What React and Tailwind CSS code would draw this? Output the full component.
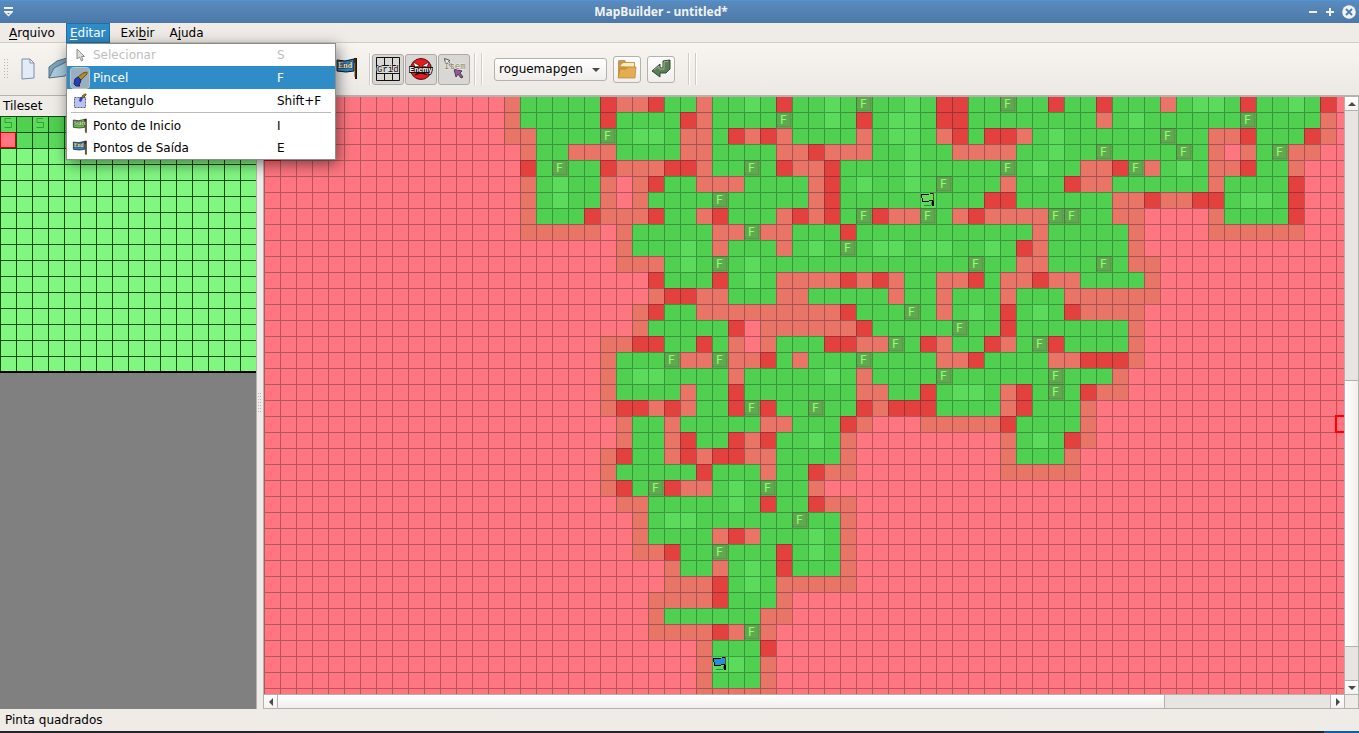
import { useState } from 'react';

const CELL = 16;

const COLORS = {
  '.': '#ff7680',
  o: '#e97568',
  g: '#50d050',
  l: '#5bdb5b',
  r: '#e34040',
  F: '#60a850',
  S: '#5bdb5b',
  E: '#5bdb5b',
};

// One entry per row: first column, then one letter per tile. Tiles that are not listed are walls.
const MAP = [
  [15, 'ogggggroorggogglgr' + 'gglgFgglgrrggFggrg' + 'grgggogllgrgglgr.'],
  [15, 'ogggggrggggroggggF' + 'gglgrgllgrrggggggg' + 'goglggggggFggggo.'],
  [15, 'ooggggFgllgoogroro' + 'ggggogllgorgrroglg' + 'gggggFggoorgggro.'],
  [15, '.oggoooggggooggggo' + 'orooogglggoooogglg' + 'gFggggFgo.ogFoo..'],
  [15, '.rgFggrooorroggFgr' + 'oorgggglgggggFglgg' + 'oorFoglgoorggo...'],
  [15, '.oglggo.orggoooggg' + 'gorglgglgFgggogggr' + 'ooggggggoggggr...'],
  [15, '.oglggo.oggggFgggg' + 'gorgggggSgggrrgggg' + 'ggooroorrgllgr...'],
  [15, '.ogggrooorggorgggo' + 'rorgFrooFgorooooFF' + 'ggoo....oggggr...'],
  [15, '.ooooo.ogggggooFoo' + 'gggrgggggggggggogg' + 'gggo....oooooo...'],
  [15, '.......oggglgogggo' + 'glgFgllgllgglgrogg' + 'gggo'],
  [15, '.......oooglgFglgg' + 'gggggggggggFggoogg' + 'gFgoo'],
  [15, '.........rgggrglgo' + 'ooororoggoorgooroo' + 'ggggo'],
  [15, '.........orroogggo' + 'ogggggoggogggogggo' + 'ooooo'],
  [20, '...orggooooooooor' + 'gggFgoglgrglgroooo.'],
  [20, '...ogggggr.oooooo' + 'rgggggFggrgggggggo.'],
  [20, '.oorrggrgo.ogggrr' + 'ooFgroggrogFrggggo.'],
  [20, '.ogggFooFoorgoggg' + 'Fggggoorggggoorrro.'],
  [20, '.ogllggggogggggl' + 'g' + 'oggggFggggggFgggo..'],
  [20, '.oggggoggrggggggg' + 'ooggrgllgorgFgroo..'],
  [20, '.orroroggrFrggFgg' + 'rorrrggggorgggo....'],
  [20, '..oggogggggoogggr' + 'o...ooooorggggo....'],
  [20, '..oggorggrorgglgo' + '.........oglgro....'],
  [20, '.orggororrooggggo' + '.........ogggo.....'],
  [20, '.ogggggrgggoggroo' + '.........ooooo.....'],
  [20, '.orgFrooglgFggo..'],
  [20, '..ooggggglgrggroo.'],
  [20, '...ogllggggggFggo.'],
  [20, '...oggggoroggglgo.'],
  [20, '...oorggFgggrglgo.'],
  [20, '.....oggoglgrgggo.'],
  [20, '.....ooorglgooooo.'],
  [20, '....oooorgggo.....'],
  [20, '....oggggggoo.....'],
  [20, '....ooooroFo......'],
  [20, '.......ogggr......'],
  [20, '.......oElgo......'],
  [20, '.......ogggo......'],
  [20, '.......ooooo......'],
];

const TILES = MAP.flatMap(([start, line], row) =>
  [...line].map((kind, i) => ({ kind, x: (start + i) * CELL, y: row * CELL })),
).filter((t) => t.kind !== '.');

function Marker({ x, y, fill }) {
  return (
    <g transform={`translate(${x} ${y})`} shapeRendering="crispEdges">
      <path d="M4 13h7v1H4zM11 10h1v3h-1z" fill="#2f8f2f" />
      <path d="M2 3h7V2h4v6H9v1H3V6H2z" fill={fill} />
      <path d="M1 2h3v1H2v3H1zM2 6h1v4H2zM3 9h6v1H3zM9 8h4v1H9zM10 1h3v1h-3zM4 2h5v1H4zM12 9h2v5h-2z" fill="#000" />
      <path d="M13 1h1v8h-1z" fill="#6b4a12" />
    </g>
  );
}

function MapView() {
  return (
    <svg className="block h-full w-full" role="img" aria-label="Mapa" fontFamily="'DejaVu Sans', sans-serif">
      <defs>
        <pattern id="grid" width={CELL} height={CELL} patternUnits="userSpaceOnUse">
          <path d="M0 0H16V1H1V16H0Z" fill="#141414" fillOpacity="0.32" />
        </pattern>
      </defs>
      <svg y="-1" overflow="visible">
        <rect width="100%" height="110%" fill={COLORS['.']} />
        <g shapeRendering="crispEdges">
          {TILES.map((t) => (
            <rect key={`${t.x}-${t.y}`} x={t.x} y={t.y} width={CELL} height={CELL} fill={COLORS[t.kind]} />
          ))}
        </g>
        {TILES.filter((t) => t.kind === 'F').map((t) => (
          <g key={`f${t.x}-${t.y}`}>
            <path d={`M${t.x + 1} ${t.y + 14.5}h13.5v-13`} fill="none" stroke="#579a48" />
            <text x={t.x + 4} y={t.y + 12} fontSize="12" fill="#8cff66">F</text>
          </g>
        ))}
        <rect width="100%" height="110%" fill="url(#grid)" />
        {TILES.filter((t) => t.kind === 'S').map((t) => <Marker key="start" x={t.x} y={t.y} fill="#62e052" />)}
        {TILES.filter((t) => t.kind === 'E').map((t) => <Marker key="end" x={t.x} y={t.y} fill="#2090e0" />)}
        <rect x="0.5" y="48.5" width="16" height="16" fill="none" stroke="#e00000" />
        <rect x="1072" y="320" width="16" height="16" fill="none" stroke="#ff0000" strokeWidth="2" />
      </svg>
    </svg>
  );
}

function Tileset() {
  return (
    <svg width="257" height="257" className="block" role="img" aria-label="Tileset">
      <rect width="256" height="257" fill="#80f880" />
      <rect width="256" height="32" fill="#5bdb5b" />
      <path d="M16 0h16v16H16zM48 0h208v16H48z" fill="#50d050" />
      {[0, 32].map((x) => (
        <path key={x} d={`M${x + 11} 2.5h-6v4h6.500v5h-7`} fill="none" stroke="#2fa42f" />
      ))}
      {Array.from({ length: 16 }, (_, i) => (
        <path key={i} d={`M${i * 16 + 0.5} 0V256M0 ${i * 16 + 0.5}H256`} stroke="#144a14" />
      ))}
      <path d="M0 256h257" stroke="#000" strokeWidth="2" />
      <rect x="0.5" y="16.5" width="15" height="15" fill="#ff7680" stroke="#d80000" />
    </svg>
  );
}

function BannerIcon({ className, color, label }) {
  return (
    <svg viewBox="0 0 22 24" className={className} fontFamily="'Liberation Serif', serif">
      <path d="M1 3l8 1 9-2v12l-8 1-9-1z" fill={color} stroke="#111" />
      <path d="M18 1h3v21h-2V6h-1z" fill="#1c1608" />
      <path d="M19 2v18" stroke="#6b4c1c" />
      <text x="2" y="11" fontSize="8" fontWeight="700" fill="#f4ecc8" stroke="#333" strokeWidth="1" paintOrder="stroke">{label}</text>
    </svg>
  );
}

function CursorIcon({ className }) {
  return (
    <svg viewBox="0 0 16 16" className={className}>
      <path d="M5 2v10l2.500-2 2 4 1.500-1-1.500-3.500h3z" fill="#dedede" stroke="#8c8c8c" />
    </svg>
  );
}

function BrushIcon({ className }) {
  return (
    <svg viewBox="0 0 20 22" className={className}>
      <rect x="0.500" y="0.500" width="19" height="21" rx="3" fill="#9aafbd" stroke="#b9c6cf" />
      <path d="M8 10l5-4 4-1v2l-6 6z" fill="#b08a30" stroke="#6e521a" />
      <path d="M8 10l3 3-1 3-1 2 1 1H6l-2-2 1-5z" fill="#2440b4" stroke="#15246c" />
    </svg>
  );
}

function RectIcon({ className }) {
  return (
    <svg viewBox="0 0 16 16" className={className}>
      <rect x="2.500" y="4.500" width="11" height="10" fill="#b8c4ee" stroke="#5a6080" strokeDasharray="2 1" />
      <path d="M10 3l3-2h1v1l-3 3z" fill="#a8812a" stroke="#6e521a" />
      <path d="M7 8l1-4 3 1-2 4z" fill="#2440b4" />
    </svg>
  );
}

function MenuTitle({ before = '', mark, after, active }) {
  return (
    <button
      type="button"
      className={
        active
          ? 'h-5 border border-[#1f6fa8] bg-[#308cc6] px-[3px] text-white'
          : 'h-5 border border-transparent px-[3px] text-black'
      }
    >
      {before}
      <span className="underline underline-offset-2">{mark}</span>
      {after}
    </button>
  );
}

function MenuItem({ icon, label, keys, selected, disabled }) {
  const tone = selected ? 'bg-[#308cc6] text-white' : disabled ? 'text-[#bebebe]' : 'text-black';
  return (
    <button type="button" role="menuitem" disabled={disabled} className={`flex h-[23px] w-full items-center text-left first:h-[22px] last:h-[22px] ${tone}`}>
      <span className="flex w-[26px] items-center justify-center">{icon}</span>
      <span className="w-[184px]">{label}</span>
      <span>{keys}</span>
    </button>
  );
}

function ToolButton({ label, children, pressed }) {
  return (
    <button
      type="button"
      aria-label={label}
      aria-pressed={pressed}
      className={
        pressed
          ? 'flex h-[31px] w-8 items-center justify-center rounded-[3px] border border-[#acaaa7] bg-[#d9d7d4]'
          : 'flex h-[27px] w-7 items-center justify-center rounded-[3px] border border-[#b5b2ae] bg-gradient-to-b from-white to-[#f0eeeb]'
      }
    >
      {children}
    </button>
  );
}

function Divider() {
  return <div className="h-8 w-px border-r border-white bg-[#cfccc8] box-content" />;
}

function ScrollButton({ label, d, className }) {
  return (
    <button type="button" aria-label={label} className={`flex shrink-0 items-center justify-center bg-gradient-to-b from-white to-[#f3f2f0] ${className}`}>
      <svg viewBox="0 0 8 8" className="size-2"><path d={d} fill="#4a4a4a" /></svg>
    </button>
  );
}

export default function App() {
  const [generator, setGenerator] = useState('roguemapgen');
  return (
    <div className="flex h-screen flex-col overflow-hidden bg-[#efebe7] font-['DejaVu_Sans',sans-serif] text-[12px] leading-4 text-black">
      <header className="flex h-[23px] shrink-0 items-center border-t border-[#4f93d8] bg-gradient-to-b from-[#5a8bbd] to-[#4b78a8] pl-1 pr-[3px] text-[#f2f2f2]">
        <button type="button" aria-label="Menu da janela" className="size-[10px]">
          <svg viewBox="0 0 10 10" className="size-[10px]"><path d="M0 0h9v2H0zM0 4h9v1L4.500 9.500 0 5zM3 6l1.500 1.500L6 6z" fill="#f2f2f2" fillRule="evenodd" /></svg>
        </button>
        <h1 className="flex-1 text-center font-['Noto_Sans',sans-serif] text-[12px] font-bold">MapBuilder - untitled*</h1>
        <div className="flex items-center justify-end gap-[7px]">
          <button type="button" aria-label="Minimizar"><svg viewBox="0 0 10 10" className="size-[10px]"><path d="M1 4h8v2H1z" fill="#f2f2f2" /></svg></button>
          <button type="button" aria-label="Maximizar"><svg viewBox="0 0 10 10" className="size-[10px]"><path d="M1 4h3V1h2v3h3v2H6v3H4V6H1z" fill="#f2f2f2" /></svg></button>
          <button type="button" aria-label="Fechar"><svg viewBox="0 0 14 14" className="size-[14px]"><circle cx="7" cy="7" r="6.800" fill="#f2f2f2" /><path d="M4 4l6 6M10 4l-6 6" stroke="#4f80b2" strokeWidth="2" /></svg></button>
        </div>
      </header>

      <nav className="relative z-10 flex h-5 shrink-0 items-start border-b border-[#d0cdc9] pl-[5px]">
        <div className="flex gap-[7px]">
          <MenuTitle mark="A" after="rquivo" />
          <MenuTitle mark="E" after="ditar" active />
          <MenuTitle before="Exi" mark="b" after="ir" />
          <MenuTitle before="A" mark="j" after="uda" />
        </div>
        <div role="menu" className="absolute left-[66px] top-5 w-[270px] border border-[#8f8d8a] bg-white shadow-[2px_4px_14px_rgba(0,0,0,0.5)]">
          <MenuItem icon={<CursorIcon className="size-4" />} label="Selecionar" keys="S" disabled />
          <MenuItem icon={<BrushIcon className="h-[22px] w-5" />} label="Pincel" keys="F" selected />
          <MenuItem icon={<RectIcon className="size-4" />} label="Retangulo" keys="Shift+F" />
          <div className="mx-1 h-[2px] border-t border-[#bdbbb8]" />
          <MenuItem icon={<BannerIcon className="size-4" color="#58c840" label="Start" />} label="Ponto de Inicio" keys="I" />
          <MenuItem icon={<BannerIcon className="size-4" color="#2f80bc" label="End" />} label="Pontos de Saída" keys="E" />
        </div>
      </nav>

      <div className="flex h-[53px] shrink-0 items-center border-b border-[#b5b2ae] bg-gradient-to-b from-[#f8f5f1] to-[#ece9e5] pl-1">
        <svg viewBox="0 0 6 20" className="h-5 w-[6px]"><path d="M.5 0v20M3.500 0v20" stroke="#b8b5b1" strokeDasharray="1 2" /></svg>
        <button type="button" aria-label="Novo" className="flex w-9 justify-center">
          <svg viewBox="0 0 24 24" className="size-6"><path d="M6 2h8l4 4v15l-12 1z" fill="#e2ebf7" stroke="#7c8fa8" /><path d="M14 2v4h4z" fill="#fff" stroke="#7c8fa8" /></svg>
        </button>
        <button type="button" aria-label="Abrir" className="flex w-7 justify-center">
          <svg viewBox="0 0 26 24" className="h-6 w-[26px]"><path d="M2 21V10l8-6 10-3v5z" fill="#7fa3b8" stroke="#4f7388" /><path d="M2 21l5-10 16-8v9l-5 7z" fill="#a9cbdd" stroke="#4f7388" /></svg>
        </button>
        <div className="w-[262px]" />
        <button type="button" aria-label="Pontos de Saída" className="flex w-[22px]">
          <BannerIcon className="h-6 w-[22px]" color="#2488c8" label="End" />
        </button>
        <div className="flex items-center gap-px pl-[11px]">
          <Divider />
          <ToolButton label="Grid" pressed>
            <svg viewBox="0 0 24 24" className="size-6" fontFamily="'Liberation Mono', monospace"><path d="M.5.5h23v23H.5zM8.500 0v24M16.500 0v24M0 8.500h24M0 16.500h24" fill="none" stroke="#111" /><text x="1" y="15" fontSize="9" fill="#111" stroke="#ddd" strokeWidth="2" paintOrder="stroke">Grid</text></svg>
          </ToolButton>
          <ToolButton label="Enemy" pressed>
            <svg viewBox="0 0 24 24" className="size-6" fontFamily="'Liberation Sans', sans-serif"><circle cx="12" cy="12" r="10.500" fill="#e01c1c" stroke="#5a0c0c" /><path d="M4 5l7 4-5 1zM20 5l-7 4 5 1z" fill="#fff" stroke="#300" strokeWidth=".6" /><path d="M6 18q6-4 12 0" fill="none" stroke="#200" strokeWidth="1.500" /><text x="12" y="15" textAnchor="middle" fontSize="7" fontWeight="700" fill="#fff" stroke="#111" strokeWidth="2" paintOrder="stroke">Enemy</text></svg>
          </ToolButton>
          <ToolButton label="Item" pressed>
            <svg viewBox="0 0 24 24" className="size-6" fontFamily="'Liberation Mono', monospace"><path d="M2.500 1.500l1 5 2-1 5 6 1-1-5-6 1.500-1z" fill="#eee" stroke="#555" /><path d="M12 12l8 2-2 2 3 4-2 1-3-4-2 3z" fill="#a050a0" stroke="#444" /><text x="2" y="12" fontSize="9" fill="#8a8256" stroke="#eee" strokeWidth="1" paintOrder="stroke">Item</text></svg>
          </ToolButton>
        </div>
        <div className="flex items-center gap-[5px] pl-1"><Divider /><Divider /></div>
        <div className="relative ml-[11px] flex">
          <select aria-label="Gerador" value={generator} onChange={(e) => setGenerator(e.target.value)} className="h-[23px] w-[113px] appearance-none rounded-[3px] border border-[#b5b2ae] bg-gradient-to-b from-white to-[#f0eeeb] pl-1 text-[12px]">
            <option>roguemapgen</option>
          </select>
          <svg viewBox="0 0 8 4" className="pointer-events-none absolute right-[7px] top-[10px] h-1 w-2"><path d="M0 0h8L4 4z" fill="#4a4a4a" /></svg>
        </div>
        <div className="flex gap-[6px] pl-[6px]">
          <ToolButton label="Abrir gerador">
            <svg viewBox="0 0 20 20" className="size-5"><path d="M1 18V2l1-1h6l1 2h9v15z" fill="#c9974a" /><path d="M3 7l3-3h11v4z" fill="#f7e9c4" /><path d="M1 19l2-9h6l2-2h8l-1 11z" fill="#e3ad50" stroke="#b07a28" strokeWidth=".6" /></svg>
          </ToolButton>
          <ToolButton label="Gerar">
            <svg viewBox="0 0 20 20" className="size-5"><path d="M12 2l7-1v9l-4 4H9v4L1 12l8-7v4h3z" fill="#5e7c58" stroke="#33482f" /><path d="M3 11l5-4v3h5V3l4-1" fill="none" stroke="#9db596" /></svg>
          </ToolButton>
        </div>
        <div className="flex items-center gap-[5px] pl-[13px]"><Divider /><Divider /></div>
      </div>

      <main className="flex min-h-0 flex-1">
        <aside className="flex w-[257px] shrink-0 flex-col">
          <h2 className="h-5 pl-[3px] pt-[2px]">Tileset</h2>
          <div className="min-h-0 flex-1 overflow-hidden border-r border-[#b5b2ae] bg-[#808080]"><Tileset /></div>
        </aside>
        <div className="flex w-[6px] shrink-0 items-center justify-center">
          <svg viewBox="0 0 4 20" className="h-5 w-1"><path d="M.5 0v20M2.500 0v20" stroke="#b8b5b1" strokeDasharray="1 2" /></svg>
        </div>
        <section className="flex min-w-0 flex-1 flex-col border border-[#b5b2ae]">
          <div className="flex min-h-0 flex-1">
            <div className="min-w-0 flex-1 overflow-hidden"><MapView /></div>
            <div className="flex w-[14px] flex-col border-l border-[#b5b2ae] bg-[#e7e4e1]">
              <ScrollButton label="Para cima" d="M0 6h8L4 2z" className="h-[14px] w-full border-b border-[#b5b2ae]" />
              <div className="flex-[270]" />
              <div className="flex-[266] border-y border-[#b5b2ae] bg-gradient-to-r from-white to-[#f0eeeb]" />
              <div className="flex-[33]" />
              <ScrollButton label="Para baixo" d="M0 2h8L4 6z" className="h-[14px] w-full border-t border-[#b5b2ae]" />
            </div>
          </div>
          <div className="flex h-[14px] shrink-0 border-t border-[#b5b2ae]">
            <div className="flex min-w-0 flex-1 bg-[#e7e4e1]">
              <ScrollButton label="Para a esquerda" d="M6 0v8L2 4z" className="h-full w-[14px] border-r border-[#b5b2ae]" />
              <div className="flex-[888] border-r border-[#b5b2ae] bg-gradient-to-b from-white to-[#f0eeeb]" />
              <div className="flex-[165]" />
              <ScrollButton label="Para a direita" d="M2 0v8l4-4z" className="h-full w-[14px] border-l border-[#b5b2ae]" />
            </div>
            <div className="w-[14px] border-l border-[#b5b2ae]" />
          </div>
        </section>
      </main>

      <footer className="shrink-0">
        <p className="flex h-[22px] items-center pl-[5px]">Pinta quadrados</p>
        <div className="flex h-[2px] justify-end bg-[#23272b]"><div className="h-full w-[35px] bg-[#1c5aa0]" /></div>
      </footer>
    </div>
  );
}
